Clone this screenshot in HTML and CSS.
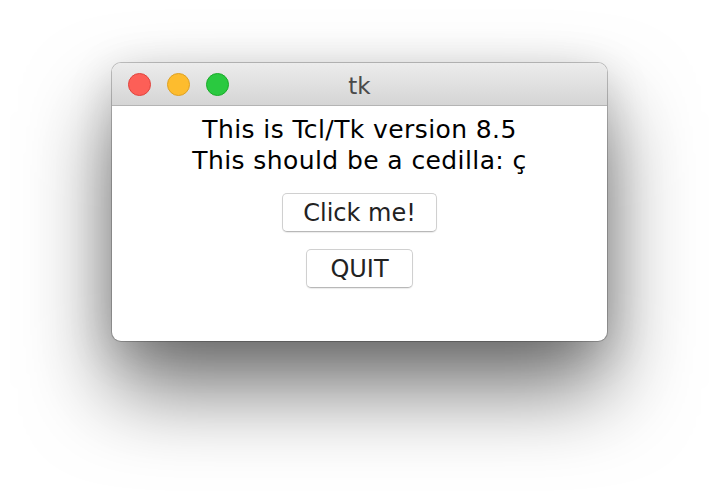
FILE: index.html
```html
<!DOCTYPE html>
<html>
<head>
<meta charset="utf-8">
<link rel="stylesheet" href="styles.css">
</head>
<body>
<div class="window">
  <div class="titlebar">
    <div class="lights">
      <span class="light red"></span>
      <span class="light yellow"></span>
      <span class="light green"></span>
    </div>
    <div class="title">tk</div>
  </div>
  <div class="content">
    <div class="label">This is Tcl/Tk version 8.5<br>This should be a cedilla: ç</div>
    <button class="btn btn-click">Click me!</button>
    <button class="btn btn-quit">QUIT</button>
  </div>
</div>
</body>
</html>
```
FILE: styles.css
```css
html, body {
  margin: 0;
  padding: 0;
  background: #ffffff;
  width: 718px;
  height: 500px;
  overflow: hidden;
}
body {
  font-family: "DejaVu Sans", Verdana, sans-serif;
}
.window {
  margin: 63px 0 0 112px;
  width: 495px;
  height: 278px;
  border-radius: 9px;
  background: #ffffff;
  box-shadow: 0 0 0 1px rgba(0,0,0,0.22), 0 48px 85px rgba(0,0,0,0.55), 0 10px 45px rgba(0,0,0,0.15);
  overflow: hidden;
  display: flex;
  flex-direction: column;
}
.titlebar {
  position: relative;
  height: 43px;
  flex: none;
  background: linear-gradient(#ececec, #d5d5d5);
  border-bottom: 1px solid #b4b4b4;
  box-sizing: border-box;
  display: flex;
  align-items: center;
}
.lights {
  display: flex;
  gap: 16px;
  padding-left: 16px;
}
.light {
  width: 23px;
  height: 23px;
  border-radius: 50%;
  box-sizing: border-box;
}
.red { background: #fd5f57; border: 1px solid #e0443e; }
.yellow { background: #fdbc2e; border: 1px solid #dea123; }
.green { background: #2ac940; border: 1px solid #1aab29; }
.title {
  position: absolute;
  left: 0;
  right: 0;
  top: 10px;
  text-align: center;
  font-size: 23px;
  color: #4a4a4a;
  pointer-events: none;
}
.content {
  flex: 1;
  display: flex;
  flex-direction: column;
  align-items: center;
  padding-top: 8px;
}
.label {
  text-align: center;
  font-size: 25px;
  letter-spacing: 0.4px;
  line-height: 31px;
  color: #000;
}
.btn {
  font-family: "DejaVu Sans", Verdana, sans-serif;
  font-size: 24px;
  color: #222;
  background: #fff;
  border: 1px solid #d0d0d0;
  border-bottom-color: #b8b8b8;
  border-radius: 5px;
  height: 39px;
  padding: 0;
  box-shadow: 0 1px 1px rgba(0,0,0,0.08);
}
.btn-click {
  width: 155px;
  margin-top: 17px;
}
.btn-quit {
  width: 107px;
  margin-top: 17px;
}
```
